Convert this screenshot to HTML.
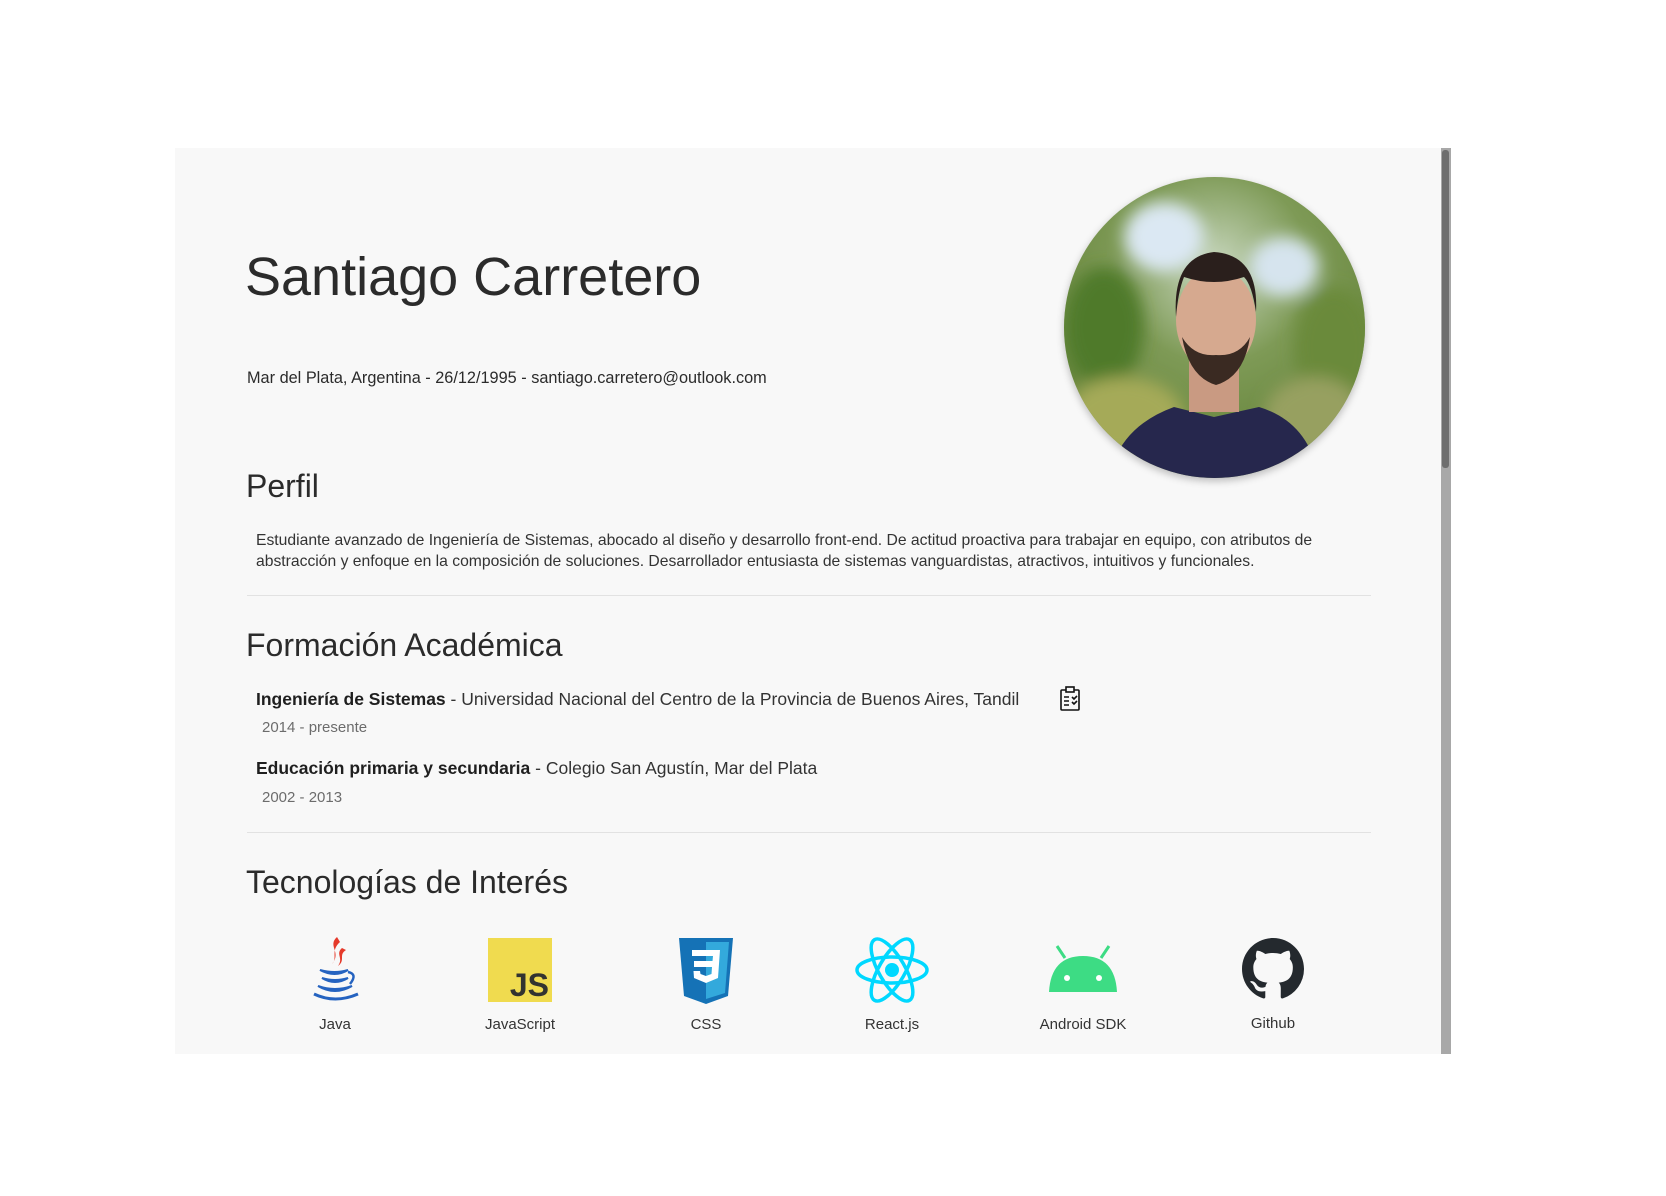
<!DOCTYPE html>
<html><head><meta charset="utf-8">
<style>
*{margin:0;padding:0;box-sizing:border-box}
html,body{width:1666px;height:1196px;background:#fff;overflow:hidden;font-family:"Liberation Sans",sans-serif;color:#212529}
.panel{position:absolute;left:175px;top:148px;width:1276px;height:906px;background:#f8f8f8}
.sb{position:absolute;left:1441px;top:148px;width:10px;height:906px;background:#a8a8a8}
.sb .th{position:absolute;left:1px;top:2px;width:7px;height:318px;background:#6e6e6e;border-radius:3px}
.abs{position:absolute;white-space:nowrap}
h1{font-weight:300;font-size:54px;color:#2b2b2b}
h2{font-weight:300;font-size:32px;color:#2b2b2b}
.small{font-size:15.7px;color:#2b2b2b}
.hr{position:absolute;left:247px;width:1124px;height:1px;background:#e2e2e2}
.item{font-size:17.5px;color:#333}
.item b{color:#1f1f1f}
.date{font-size:15px;color:#6c6c6c}
.photo{position:absolute;left:1064px;top:177px;width:301px;height:301px;border-radius:50%;overflow:hidden;box-shadow:0 3px 8px rgba(0,0,0,.25)}
.tech{position:absolute;width:160px;text-align:center;font-size:15px;color:#333}
.tech svg{display:block;margin:0 auto}
</style></head><body>
<div class="panel"></div>
<div class="sb"><div class="th"></div></div>

<div class="abs" style="left:245px;top:246px"><h1>Santiago Carretero</h1></div>
<div class="abs small" style="left:247px;top:369px;font-size:16.3px">Mar del Plata, Argentina - 26/12/1995 - santiago.carretero@outlook.com</div>

<div class="photo">
<svg width="301" height="301" viewBox="0 0 301 301">
<defs>
<radialGradient id="bg" cx="0.5" cy="0.3" r="0.8">
<stop offset="0" stop-color="#c9d8c0"/><stop offset="0.4" stop-color="#7e9a56"/><stop offset="1" stop-color="#5a7a2e"/></radialGradient>
<filter id="bl"><feGaussianBlur stdDeviation="8"/></filter>
</defs>
<rect width="301" height="301" fill="url(#bg)"/>
<g filter="url(#bl)">
<ellipse cx="100" cy="60" rx="40" ry="35" fill="#dbe8f3"/>
<ellipse cx="220" cy="90" rx="35" ry="30" fill="#d6e4ee"/>
<ellipse cx="40" cy="150" rx="40" ry="60" fill="#4f7a2a"/>
<ellipse cx="270" cy="170" rx="40" ry="60" fill="#6b8a3a"/>
<ellipse cx="60" cy="240" rx="60" ry="40" fill="#a5aa58"/>
<ellipse cx="250" cy="240" rx="50" ry="40" fill="#97a060"/>
</g>
<path d="M45 301 Q55 250 110 230 L150 240 L195 230 Q245 245 255 301 Z" fill="#26274d"/>
<rect x="125" y="175" width="50" height="60" fill="#c99a82"/>
<ellipse cx="152" cy="143" rx="40" ry="52" fill="#d6a98f"/>
<path d="M112 140 Q108 80 150 75 Q195 78 192 135 Q188 108 180 100 Q150 110 120 100 Q114 115 112 140Z" fill="#2a1f1c"/>
<path d="M118 160 Q125 200 152 208 Q180 200 186 160 Q175 180 152 178 Q130 180 118 160Z" fill="#3a2a22"/>
</svg>
</div>

<div class="abs" style="left:246px;top:468px"><h2>Perfil</h2></div>
<div class="abs small" style="left:256px;top:530px;line-height:21px;color:#333">Estudiante avanzado de Ingeniería de Sistemas, abocado al diseño y desarrollo front-end. De actitud proactiva para trabajar en equipo, con atributos de<br>abstracción y enfoque en la composición de soluciones. Desarrollador entusiasta de sistemas vanguardistas, atractivos, intuitivos y funcionales.</div>
<div class="hr" style="top:595px"></div>

<div class="abs" style="left:246px;top:627px"><h2>Formación Académica</h2></div>
<div class="abs item" style="left:256px;top:689px"><b>Ingeniería de Sistemas</b> - Universidad Nacional del Centro de la Provincia de Buenos Aires, Tandil</div>
<svg class="abs" style="left:1059px;top:686px" width="22" height="25" viewBox="0 0 22 25" fill="none" stroke="#111" stroke-width="1.6">
<rect x="2" y="4" width="18" height="20" rx="1"/><rect x="7" y="1" width="8" height="5" fill="#f8f8f8"/>
<path d="M5 11h5M5 15h5M5 19h5M13 11l2 2 3-3M13 16l2 2 3-3"/></svg>
<div class="abs date" style="left:262px;top:719px">2014 - presente</div>
<div class="abs item" style="left:256px;top:758px"><b>Educación primaria y secundaria</b> - Colegio San Agustín, Mar del Plata</div>
<div class="abs date" style="left:262px;top:789px">2002 - 2013</div>
<div class="hr" style="top:832px"></div>

<div class="abs" style="left:246px;top:864px"><h2>Tecnologías de Interés</h2></div>

<div class="tech" style="left:255px;top:934px">
<svg width="66" height="70" viewBox="0 0 66 70">
<path d="M35 3 C25 12 40 18 30 30 C36 24 28 17 38 8Z" fill="#e53a2b"/>
<path d="M40 14 C33 20 42 24 36 32 C44 26 36 21 44 16Z" fill="#e53a2b"/>
<path d="M18 36 Q33 40 46 36 Q33 44 18 36Z M20 44 Q33 48 46 44 Q33 52 20 44Z M16 52 Q33 58 50 52 Q33 62 16 52Z" fill="#2563c0" stroke="#2563c0" stroke-width="2"/>
<path d="M12 60 Q33 70 56 60" stroke="#2563c0" stroke-width="3" fill="none"/>
<path d="M46 38 Q56 40 48 50" stroke="#2563c0" stroke-width="2.5" fill="none"/>
</svg><div style="margin-top:12px">Java</div></div>

<div class="tech" style="left:440px;top:938px">
<svg width="64" height="64" viewBox="0 0 64 64"><rect width="64" height="64" fill="#f0db4f"/>
<text x="61" y="58" text-anchor="end" font-family="Liberation Sans" font-weight="bold" font-size="32" fill="#323330">JS</text></svg>
<div style="margin-top:14px">JavaScript</div></div>

<div class="tech" style="left:626px;top:938px">
<svg width="58" height="66" viewBox="0 0 58 66"><path d="M2 0H56L51 58L29 66L7 58Z" fill="#1572b6"/><path d="M29 4H52L48 55L29 61Z" fill="#33a9dc"/>
<path d="M15 12H43L41 40L29 45L17 40L16.5 33H23L23.5 36L29 38L34.5 36L35 29H17V23H35.5L36 18H15Z" fill="#fff"/></svg>
<div style="margin-top:12px">CSS</div></div>

<div class="tech" style="left:812px;top:934px">
<svg width="76" height="72" viewBox="-38 -36 76 72"><circle r="7" fill="#00d8ff"/>
<g fill="none" stroke="#00d8ff" stroke-width="3.5"><ellipse rx="35" ry="13"/><ellipse rx="35" ry="13" transform="rotate(60)"/><ellipse rx="35" ry="13" transform="rotate(120)"/></g></svg>
<div style="margin-top:10px">React.js</div></div>

<div class="tech" style="left:1003px;top:944px">
<svg width="72" height="52" viewBox="0 0 72 52"><path d="M2 48 Q4 12 36 12 Q68 12 70 48Z" fill="#3ddc84"/>
<path d="M18 14L10 2M54 14L62 2" stroke="#3ddc84" stroke-width="3"/><circle cx="20" cy="34" r="3" fill="#fff"/><circle cx="52" cy="34" r="3" fill="#fff"/></svg>
<div style="margin-top:20px">Android SDK</div></div>

<div class="tech" style="left:1193px;top:937px">
<svg width="62" height="64" viewBox="0 0 16 16"><path fill="#24292e" d="M8 0C3.58 0 0 3.58 0 8c0 3.540 2.29 6.53 5.47 7.59.4.07.55-.17.55-.38 0-.19-.01-.82-.01-1.49-2.01.37-2.530-.49-2.69-.94-.09-.23-.48-.94-.82-1.13-.28-.15-.68-.52-.01-.53.63-.01 1.08.58 1.23.82.72 1.21 1.870.87 2.330.66.07-.52.28-.87.51-1.07-1.78-.2-3.64-.89-3.64-3.95 0-.87.31-1.59.82-2.15-.08-.2-.36-1.02.08-2.12 0 0 .67-.21 2.2.82.64-.18 1.32-.27 2-.27.68 0 1.36.09 2 .27 1.53-1.04 2.2-.82 2.2-.82.44 1.1.16 1.92.08 2.12.51.56.82 1.27.82 2.15 0 3.07-1.87 3.75-3.65 3.95.29.25.54.73.54 1.48 0 1.07-.01 1.93-.01 2.2 0 .21.15.46.55.38A8.013 8.013 0 0016 8c0-4.42-3.58-8-8-8z"/></svg>
<div style="margin-top:14px">Github</div></div>
</body></html>
